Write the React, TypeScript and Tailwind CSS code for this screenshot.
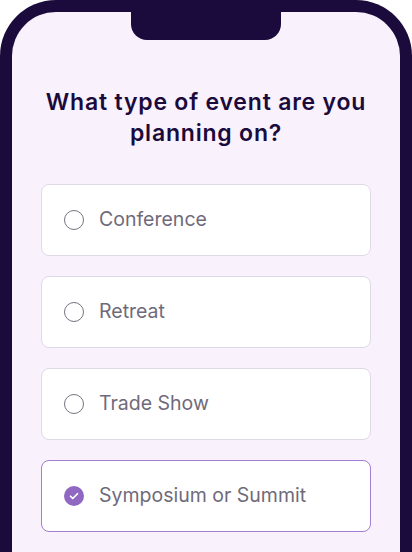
const options = [
  { label: 'Conference', checked: false },
  { label: 'Retreat', checked: false },
  { label: 'Trade Show', checked: false },
  { label: 'Symposium or Summit', checked: true },
  { label: '', checked: false },
];

function Radio({ checked }: { checked: boolean }) {
  if (checked) {
    return (
      <span className="w-5 h-5 rounded-full bg-[#9068c2] flex items-center justify-center flex-shrink-0">
        <svg width="12" height="12" viewBox="0 0 24 24" fill="none" stroke="white" strokeWidth="3.5" strokeLinecap="round" strokeLinejoin="round">
          <path d="M5 12.5l4.5 4.5L19 7.5" />
        </svg>
      </span>
    );
  }
  return <span className="w-5 h-5 rounded-full border-[1.5px] border-[#77727f] flex-shrink-0" />;
}

export default function App() {
  return (
    <div className="w-[412px] h-[552px] bg-white overflow-hidden" style={{ fontFamily: 'Inter, "Noto Sans", sans-serif' }}>
      <div className="h-full bg-[#1b0b3c] rounded-t-[56px] pt-3 px-3">
        <div className="relative h-full bg-[#f9f1fb] rounded-t-[44px] flex flex-col px-[29px] pt-[75px] overflow-hidden">
          <div className="absolute top-0 left-[119px] w-[150px] h-[28px] bg-[#1b0b3c] rounded-b-[16px]" />
          <h1 className="text-[23px] leading-[31px] font-semibold text-[#1b0b3c] text-center tracking-[0.8px]">
            What type of event are you
            <br />
            planning on?
          </h1>
          <div className="mt-[35px] flex flex-col gap-[20px]">
            {options.map((o, i) => (
              <div
                key={i}
                className={
                  o.checked
                    ? 'h-[72px] flex-shrink-0 rounded-lg bg-white border-[1.5px] border-[#a27fd0] flex items-center gap-[15px] pl-[22px]'
                    : 'h-[72px] flex-shrink-0 rounded-lg bg-white border border-[#e0d9e6] flex items-center gap-[15px] pl-[22px]'
                }
              >
                {o.label && <Radio checked={o.checked} />}
                {o.label && <span className="text-[19.5px] text-[#6f6a7a]">{o.label}</span>}
              </div>
            ))}
          </div>
        </div>
      </div>
    </div>
  );
}
